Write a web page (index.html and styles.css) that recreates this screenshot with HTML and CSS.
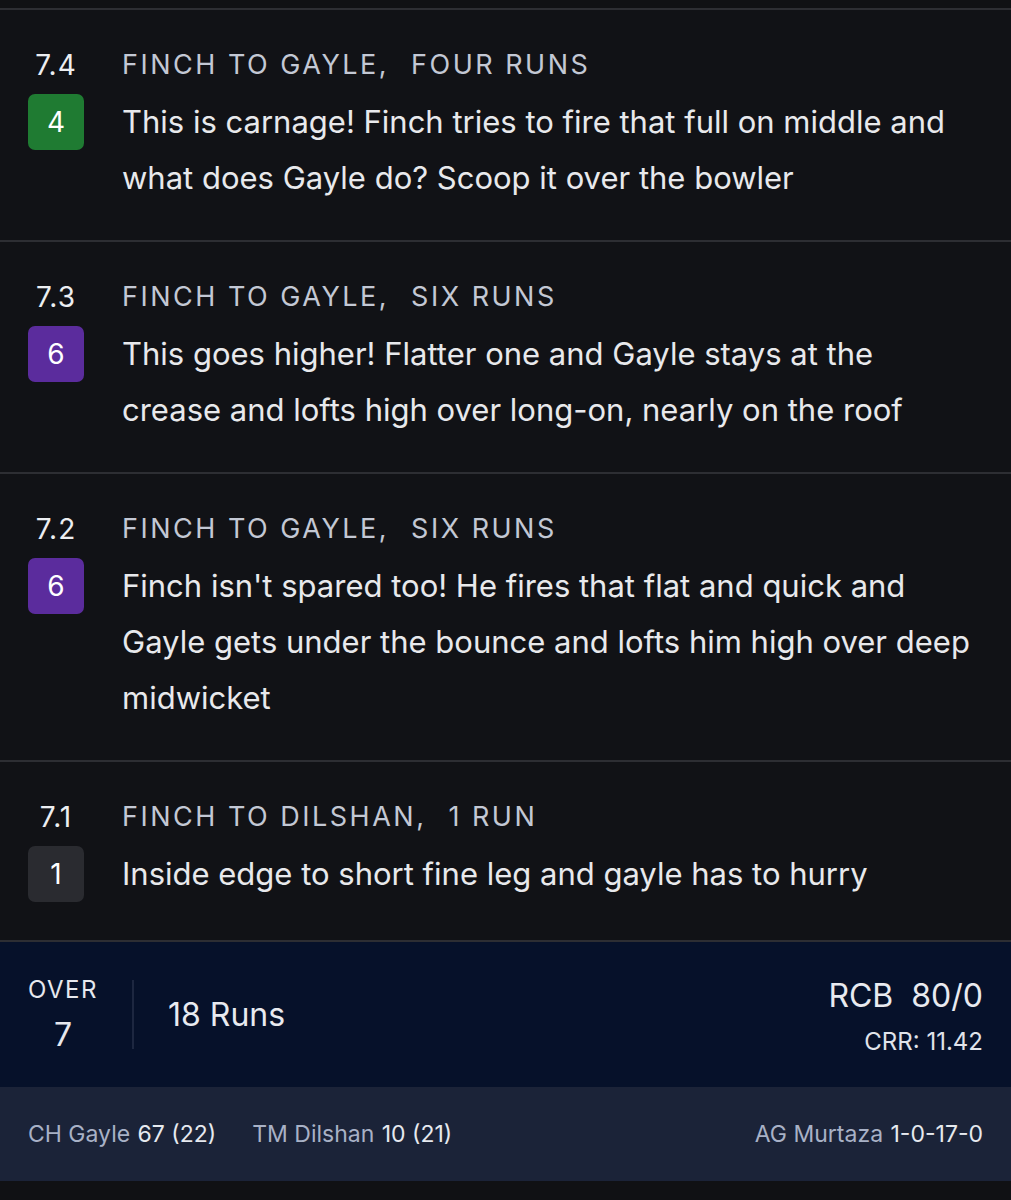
FILE: index.html
```html
<!DOCTYPE html>
<html>
<head>
<meta charset="utf-8">
<link rel="stylesheet" href="styles.css">
</head>
<body>
<div class="feed">
  <div class="ball">
    <div class="over-no">7.4</div>
    <div class="head"><span>FINCH TO GAYLE,</span><span>FOUR RUNS</span></div>
    <div class="badge four">4</div>
    <div class="comment">This is carnage! Finch tries to fire that full on middle and what does Gayle do? Scoop it over the bowler</div>
  </div>
  <div class="ball">
    <div class="over-no">7.3</div>
    <div class="head"><span>FINCH TO GAYLE,</span><span>SIX RUNS</span></div>
    <div class="badge six">6</div>
    <div class="comment">This goes higher! Flatter one and Gayle stays at the crease and lofts high over long-on, nearly on the roof</div>
  </div>
  <div class="ball">
    <div class="over-no">7.2</div>
    <div class="head"><span>FINCH TO GAYLE,</span><span>SIX RUNS</span></div>
    <div class="badge six">6</div>
    <div class="comment">Finch isn't spared too! He fires that flat and quick and Gayle gets under the bounce and lofts him high over deep midwicket</div>
  </div>
  <div class="ball">
    <div class="over-no">7.1</div>
    <div class="head"><span>FINCH TO DILSHAN,</span><span>1 RUN</span></div>
    <div class="badge one">1</div>
    <div class="comment">Inside edge to short fine leg and gayle has to hurry</div>
  </div>
</div>
<div class="summary">
  <div class="over-box">
    <div class="over-label">OVER</div>
    <div class="over-val">7</div>
  </div>
  <div class="divider"></div>
  <div class="runs">18 Runs</div>
  <div class="score">
    <div class="team">RCB&nbsp; 80/0</div>
    <div class="crr">CRR: 11.42</div>
  </div>
</div>
<div class="players">
  <div class="p"><span class="name">CH Gayle</span> <span class="fig">67 (22)</span></div>
  <div class="p"><span class="name">TM Dilshan</span> <span class="fig">10 (21)</span></div>
  <div class="p right"><span class="name">AG Murtaza</span> <span class="fig">1-0-17-0</span></div>
</div>
</body>
</html>
```
FILE: styles.css
```css
html, body {
  margin: 0;
  padding: 0;
  background: #101114;
  font-family: Inter, "Noto Sans", sans-serif;
  color: #e6e7ea;
}
body {
  padding-top: 8px;
  padding-bottom: 20px;
}
.feed {
  background: #111216;
}
.ball {
  display: grid;
  grid-template-columns: 56px 1fr;
  column-gap: 38px;
  row-gap: 8px;
  padding: 34px 33px 34px 28px;
  border-top: 2px solid #2d2e33;
}
.ball:last-child {
  padding-bottom: 38px;
  border-bottom: 2px solid #2d2e33;
}
.over-no {
  text-align: center;
  font-size: 28px;
  letter-spacing: 1px;
  line-height: 42px;
  color: #eceef1;
  white-space: nowrap;
}
.head {
  font-size: 27px;
  line-height: 42px;
  letter-spacing: 2.5px;
  color: #c3c8d4;
  display: flex;
  gap: 22px;
}
.badge {
  width: 56px;
  height: 56px;
  border-radius: 7px;
  display: flex;
  align-items: center;
  justify-content: center;
  font-size: 28px;
  color: #fff;
}
.four { background: #1f7b32; }
.six { background: #5b2c9d; }
.one { background: #2a2b30; }
.comment {
  font-size: 31px;
  line-height: 56px;
  color: #e8e9ec;
}
.summary {
  background: #06112a;
  display: flex;
  align-items: center;
  padding: 0 28px;
  height: 145px;
}
.over-box {
  width: 70px;
  text-align: center;
  color: #e6e8ee;
  margin-bottom: 6px;
}
.over-label {
  font-size: 24px;
  letter-spacing: 1.5px;
  line-height: 45px;
}
.over-val {
  font-size: 32px;
  line-height: 45px;
}
.divider {
  width: 2px;
  height: 69px;
  background: #1d2740;
  margin-left: 34px;
  margin-right: 34px;
}
.runs {
  font-size: 32px;
  flex: 1;
  color: #e8eaf0;
}
.score {
  text-align: right;
  margin-top: 13px;
}
.team {
  font-size: 32px;
  line-height: 42px;
  color: #e8eaf0;
}
.crr {
  font-size: 24px;
  line-height: 50px;
  color: #e0e3ea;
}
.players {
  background: #1b2338;
  display: flex;
  align-items: center;
  gap: 36px;
  padding: 0 28px;
  height: 94px;
  font-size: 23px;
}
.p.right {
  margin-left: auto;
}
.name {
  color: #a8b1c6;
  margin-right: 1px;
}
.fig {
  color: #e6e9ef;
}
```
